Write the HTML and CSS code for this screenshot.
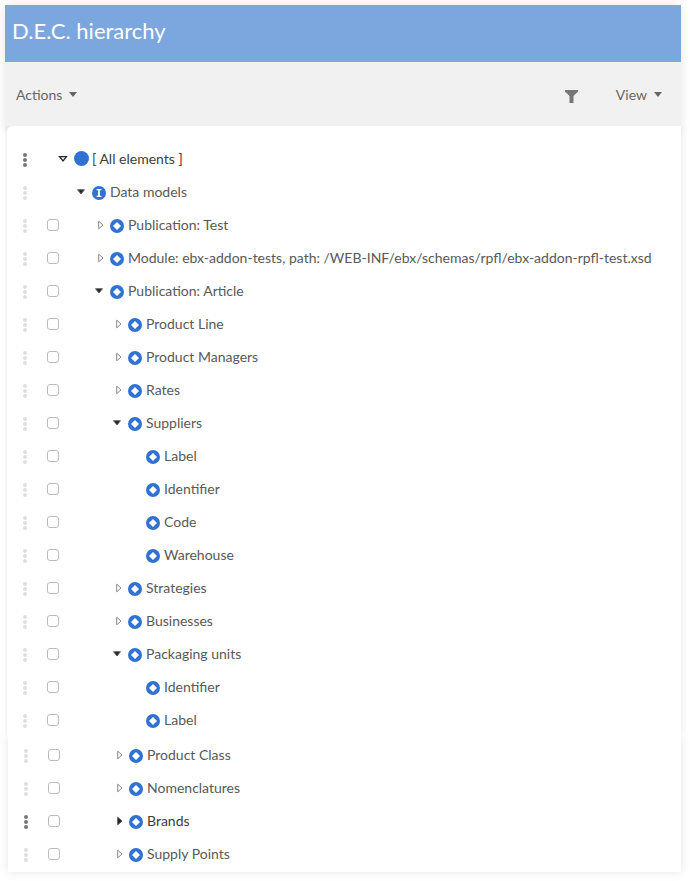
FILE: index.html
```html
<!DOCTYPE html>
<html lang="en">
<head>
<meta charset="utf-8">
<title>D.E.C. hierarchy</title>
<link rel="stylesheet" href="styles.css">
</head>
<body>
<svg class="defs" width="0" height="0" aria-hidden="true">
  <symbol id="dots" viewBox="0 0 6 16"><circle cx="3" cy="3" r="2"/><circle cx="3" cy="8" r="2"/><circle cx="3" cy="13" r="2"/></symbol>
  <symbol id="node" viewBox="0 0 14 14"><circle cx="7" cy="7" r="7" fill="#3072d2"/><path d="M7 3 11 7 7 11 3 7Z" fill="#fff"/></symbol>
  <symbol id="info" viewBox="0 0 14 14"><circle cx="7" cy="7" r="7" fill="#3072d2"/><path d="M4.6 3h4.8v1.2H7.9v5.6h1.5V11H4.6V9.8h1.5V4.2H4.6Z" fill="#fff"/></symbol>
  <symbol id="closed" viewBox="0 0 8 10"><path d="M1.7 1.2 6 5 1.7 8.8Z" fill="#fff" stroke="#888" stroke-width="1"/></symbol>
  <symbol id="hot" viewBox="0 0 8 10"><path d="M1.7 1.2 6 5 1.7 8.8Z" fill="#222" stroke="#555" stroke-width="1"/></symbol>
  <symbol id="open" viewBox="0 0 10 8"><path d="M1.5 1.7H8.5L5 6Z" fill="#222" stroke="#666" stroke-width="1"/></symbol>
  <symbol id="openlight" viewBox="0 0 10 8"><path d="M1.5 1.7H8.5L5 6Z" fill="#fff" stroke="#222" stroke-width="1.2"/></symbol>
</svg>
<main class="panel">
  <div class="top">
    <header class="title"><h1>D.E.C. hierarchy</h1></header>
    <div class="toolbar">
      <button class="menu">Actions<span class="caret"></span></button>
      <div class="tools">
        <svg class="filter" viewBox="0 0 13 13" aria-hidden="true"><path d="M0 0H13V1.5L8.5 6V13H4.5V6L0 1.5Z"/></svg>
        <button class="menu">View<span class="caret"></span></button>
      </div>
    </div>
  </div>
  <ul class="tree first">
    <li class="row on"><svg class="grip"><use href="#dots"/></svg><span class="check none"></span><span class="node d0"><svg class="tw-o"><use href="#openlight"/></svg><span class="ball"></span><span class="lbl">[ All elements ]</span></span></li>
    <li class="row"><svg class="grip"><use href="#dots"/></svg><span class="check none"></span><span class="node d1"><svg class="tw-o"><use href="#open"/></svg><svg class="ico"><use href="#info"/></svg><span class="lbl">Data models</span></span></li>
    <li class="row"><svg class="grip"><use href="#dots"/></svg><span class="check"></span><span class="node d2"><svg class="tw-c"><use href="#closed"/></svg><svg class="ico"><use href="#node"/></svg><span class="lbl">Publication: Test</span></span></li>
    <li class="row"><svg class="grip"><use href="#dots"/></svg><span class="check"></span><span class="node d2"><svg class="tw-c"><use href="#closed"/></svg><svg class="ico"><use href="#node"/></svg><span class="lbl">Module: ebx-addon-tests, path: /WEB-INF/ebx/schemas/rpfl/ebx-addon-rpfl-test.xsd</span></span></li>
    <li class="row"><svg class="grip"><use href="#dots"/></svg><span class="check"></span><span class="node d2"><svg class="tw-o"><use href="#open"/></svg><svg class="ico"><use href="#node"/></svg><span class="lbl">Publication: Article</span></span></li>
    <li class="row"><svg class="grip"><use href="#dots"/></svg><span class="check"></span><span class="node d3"><svg class="tw-c"><use href="#closed"/></svg><svg class="ico"><use href="#node"/></svg><span class="lbl">Product Line</span></span></li>
    <li class="row"><svg class="grip"><use href="#dots"/></svg><span class="check"></span><span class="node d3"><svg class="tw-c"><use href="#closed"/></svg><svg class="ico"><use href="#node"/></svg><span class="lbl">Product Managers</span></span></li>
    <li class="row"><svg class="grip"><use href="#dots"/></svg><span class="check"></span><span class="node d3"><svg class="tw-c"><use href="#closed"/></svg><svg class="ico"><use href="#node"/></svg><span class="lbl">Rates</span></span></li>
    <li class="row"><svg class="grip"><use href="#dots"/></svg><span class="check"></span><span class="node d3"><svg class="tw-o"><use href="#open"/></svg><svg class="ico"><use href="#node"/></svg><span class="lbl">Suppliers</span></span></li>
    <li class="row"><svg class="grip"><use href="#dots"/></svg><span class="check"></span><span class="node d4"><svg class="ico"><use href="#node"/></svg><span class="lbl">Label</span></span></li>
    <li class="row"><svg class="grip"><use href="#dots"/></svg><span class="check"></span><span class="node d4"><svg class="ico"><use href="#node"/></svg><span class="lbl">Identifier</span></span></li>
    <li class="row"><svg class="grip"><use href="#dots"/></svg><span class="check"></span><span class="node d4"><svg class="ico"><use href="#node"/></svg><span class="lbl">Code</span></span></li>
    <li class="row"><svg class="grip"><use href="#dots"/></svg><span class="check"></span><span class="node d4"><svg class="ico"><use href="#node"/></svg><span class="lbl">Warehouse</span></span></li>
    <li class="row"><svg class="grip"><use href="#dots"/></svg><span class="check"></span><span class="node d3"><svg class="tw-c"><use href="#closed"/></svg><svg class="ico"><use href="#node"/></svg><span class="lbl">Strategies</span></span></li>
    <li class="row"><svg class="grip"><use href="#dots"/></svg><span class="check"></span><span class="node d3"><svg class="tw-c"><use href="#closed"/></svg><svg class="ico"><use href="#node"/></svg><span class="lbl">Businesses</span></span></li>
    <li class="row"><svg class="grip"><use href="#dots"/></svg><span class="check"></span><span class="node d3"><svg class="tw-o"><use href="#open"/></svg><svg class="ico"><use href="#node"/></svg><span class="lbl">Packaging units</span></span></li>
    <li class="row"><svg class="grip"><use href="#dots"/></svg><span class="check"></span><span class="node d4"><svg class="ico"><use href="#node"/></svg><span class="lbl">Identifier</span></span></li>
    <li class="row"><svg class="grip"><use href="#dots"/></svg><span class="check"></span><span class="node d4"><svg class="ico"><use href="#node"/></svg><span class="lbl">Label</span></span></li>
  </ul>
  <ul class="tree second">
    <li class="row"><svg class="grip"><use href="#dots"/></svg><span class="check"></span><span class="node d3"><svg class="tw-c"><use href="#closed"/></svg><svg class="ico"><use href="#node"/></svg><span class="lbl">Product Class</span></span></li>
    <li class="row"><svg class="grip"><use href="#dots"/></svg><span class="check"></span><span class="node d3"><svg class="tw-c"><use href="#closed"/></svg><svg class="ico"><use href="#node"/></svg><span class="lbl">Nomenclatures</span></span></li>
    <li class="row on"><svg class="grip"><use href="#dots"/></svg><span class="check"></span><span class="node d3"><svg class="tw-c"><use href="#hot"/></svg><svg class="ico"><use href="#node"/></svg><span class="lbl">Brands</span></span></li>
    <li class="row"><svg class="grip"><use href="#dots"/></svg><span class="check"></span><span class="node d3"><svg class="tw-c"><use href="#closed"/></svg><svg class="ico"><use href="#node"/></svg><span class="lbl">Supply Points</span></span></li>
  </ul>
</main>
</body>
</html>
```
FILE: styles.css
```css
* { box-sizing: border-box; }
html, body { margin: 0; height: 100%; }
body {
  background: #fff;
  font-family: Lato, "Noto Sans", sans-serif;
  color: #555;
  overflow: hidden;
}
.defs { position: absolute; }
.panel {
  width: 676px;
  margin: 5px 0 0 5px;
}
.top {
  background: #f1f1f1;
  box-shadow: 0 0 10px rgba(0, 0, 0, 0.1);
}
.title {
  height: 57px;
  background: #7ba6de;
  display: flex;
  align-items: center;
  padding: 0 0 6px 7px;
}
.title h1 {
  margin: 0;
  font-size: 22px;
  font-weight: 400;
  color: #fff;
}
.toolbar {
  height: 69px;
  display: flex;
  align-items: center;
  justify-content: space-between;
  padding: 0 19px 5px 11px;
}
.tools { display: flex; align-items: center; gap: 38px; }
.menu {
  border: 0;
  padding: 0;
  background: none;
  font: 14px Lato, "Noto Sans", sans-serif;
  color: #666;
  display: flex;
  align-items: center;
  gap: 7px;
}
.caret {
  width: 0;
  height: 0;
  border: 4.5px solid transparent;
  border-top: 5px solid #666;
  border-bottom: 0;
}
.filter { width: 13px; height: 13px; fill: #777; display: block; margin-top: 5px; }
.tree {
  list-style: none;
  margin: 0;
  padding: 0;
  background: #fff;
  box-shadow: 0 0 10px rgba(0, 0, 0, 0.1);
}
.first {
  position: relative;
  z-index: 1;
  height: 610px;
  margin: -5px 0 0 2px;
  padding-top: 17px;
  border-radius: 5px 0 0 0;
  clip-path: inset(0 -12px 0 -2px);
}
.second {
  height: 136px;
  margin-left: 3px;
  padding-top: 3px;
  clip-path: inset(0 -12px -12px -12px);
}
.row {
  height: 33px;
  display: flex;
  align-items: center;
  padding-left: 15px;
  font-size: 14px;
}
.grip { width: 6px; height: 16px; fill: #dedede; flex: none; }
.row.on .grip { fill: #777; }
.row.on .lbl { color: #3d3d3d; }
.check {
  width: 12px;
  height: 12px;
  margin: 0 1px 1px 19px;
  flex: none;
  border: 1px solid #bbb;
  border-radius: 3px;
  background: #fff;
}
.check.none { visibility: hidden; }
.node { display: flex; align-items: center; white-space: nowrap; margin-bottom: 2px; }
.d0 { margin-left: -1px; }
.d1 { margin-left: 17px; }
.d2 { margin-left: 35px; }
.d3 { margin-left: 53px; }
.d4 { margin-left: 86px; }
.tw-c { width: 8px; height: 10px; flex: none; margin: 0 5px 0 2px; }
.tw-o { width: 10px; height: 8px; flex: none; margin: 0 6px 0 -1px; }
.ico { width: 14px; height: 14px; flex: none; margin: 2px 4px 0 0; }
.ball {
  width: 15px;
  height: 15px;
  border-radius: 50%;
  background: #3072d2;
  flex: none;
  margin-right: 3px;
}
.lbl { color: #595959; }
```
